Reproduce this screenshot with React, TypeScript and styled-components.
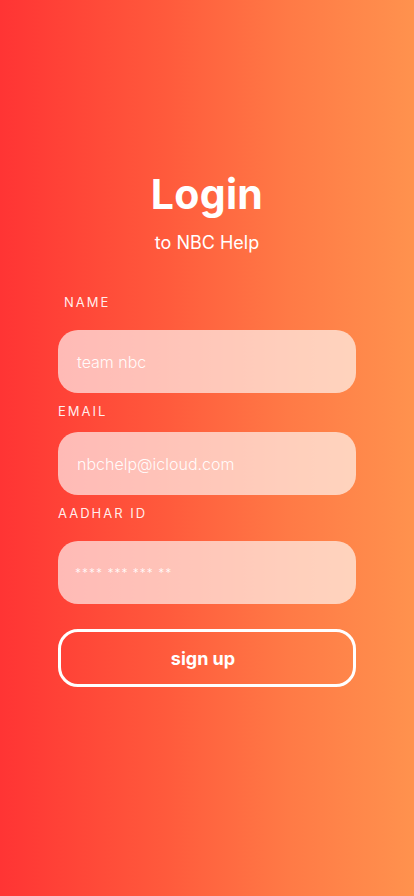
import styled, { createGlobalStyle } from 'styled-components';

const GlobalStyle = createGlobalStyle`
  html, body {
    margin: 0;
    padding: 0;
  }
  body {
    font-family: Inter, "Open Sans", sans-serif;
  }
`;

const fields = [
  { label: 'NAME', value: 'team nbc', indent: 6, labelGap: 20, top: 0 },
  { label: 'EMAIL', value: 'nbchelp@icloud.com', indent: 0, labelGap: 13, top: 10 },
  { label: 'AADHAR ID', value: '**** *** *** **', indent: 0, labelGap: 20, top: 10, masked: true },
];

const App = () => (
  <>
    <GlobalStyle />
    <Page>
      <Title>Login</Title>
      <Subtitle>to NBC Help</Subtitle>
      <Form>
        {fields.map((f) => (
          <Field key={f.label} $top={f.top}>
            <Label $indent={f.indent} $gap={f.labelGap}>{f.label}</Label>
            <Input $masked={f.masked}>{f.value}</Input>
          </Field>
        ))}
        <Button>sign up</Button>
      </Form>
    </Page>
  </>
);

const Page = styled.div`
  width: 414px;
  height: 896px;
  background: linear-gradient(90deg, #ff3434 0%, #ff5a3c 40%, #ff7a46 70%, #ff924e 100%);
  display: flex;
  flex-direction: column;
  align-items: center;
  padding-top: 170px;
  box-sizing: border-box;
  color: #fff;
`;

const Title = styled.h1`
  margin: 0;
  font-size: 41px;
  line-height: 48px;
  font-weight: 700;
  letter-spacing: 0.3px;
`;

const Subtitle = styled.p`
  margin: 13px 0 0;
  font-size: 18px;
  line-height: 24px;
  font-weight: 400;
`;

const Form = styled.div`
  width: 298px;
  margin-top: 39px;
  display: flex;
  flex-direction: column;
`;

const Field = styled.div<{ $top: number }>`
  margin-top: ${(p) => p.$top}px;
  display: flex;
  flex-direction: column;
`;

const Label = styled.div<{ $indent: number; $gap: number }>`
  padding-left: ${(p) => p.$indent}px;
  margin-bottom: ${(p) => p.$gap}px;
  font-size: 13px;
  line-height: 16px;
  letter-spacing: 2px;
  color: rgba(255, 255, 255, 0.92);
`;

const Input = styled.div<{ $masked?: boolean }>`
  height: 63px;
  border-radius: 20px;
  background: rgba(255, 255, 255, 0.64);
  display: flex;
  align-items: center;
  padding-left: ${(p) => (p.$masked ? 17 : 19)}px;
  font-size: ${(p) => (p.$masked ? 12 : 16)}px;
  letter-spacing: ${(p) => (p.$masked ? 1 : 0)}px;
  font-weight: 300;
  color: rgba(255, 255, 255, 0.95);
`;

const Button = styled.button`
  margin-top: 25px;
  height: 58px;
  border: 3px solid #fff;
  border-radius: 20px;
  background: transparent;
  color: #fff;
  font-family: Inter, sans-serif;
  font-size: 18px;
  font-weight: 700;
  padding: 0 8px 0 0;
  cursor: pointer;
`;

export default App;
